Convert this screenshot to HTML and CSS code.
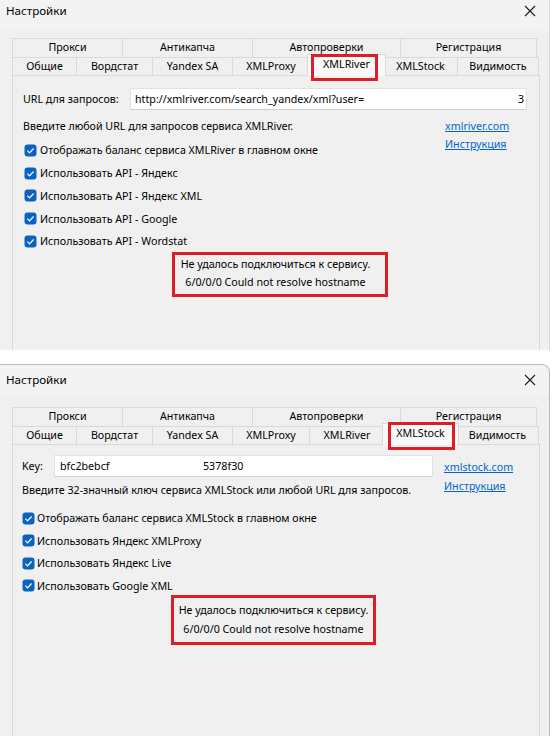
FILE: index.html
```html
<!DOCTYPE html>
<html lang="ru">
<head>
<meta charset="utf-8">
<title>Настройки</title>
<link rel="stylesheet" href="styles.css">
</head>
<body>
<div class="win win1">
  <div class="titlebar">
    <span class="title">Настройки</span>
    <svg class="close" viewBox="0 0 12 12"><path d="M1 1L11 11M11 1L1 11" stroke="#1b1b1b" stroke-width="1.1" fill="none"/></svg>
  </div>
  <div class="tabs">
    <div class="tabrow back">
      <div class="tab w-proxy">Прокси</div>
      <div class="tab w-anti">Антикапча</div>
      <div class="tab w-auto">Автопроверки</div>
      <div class="tab w-reg last">Регистрация</div>
    </div>
    <div class="tabrow front">
      <div class="tab w-gen">Общие</div>
      <div class="tab w-word">Вордстат</div>
      <div class="tab w-ysa">Yandex SA</div>
      <div class="tab w-xproxy">XMLProxy</div>
      <div class="tab w-xriver active">XMLRiver<span class="mark mark1"></span></div>
      <div class="tab w-xstock">XMLStock</div>
      <div class="tab w-vis last">Видимость</div>
    </div>
  </div>
  <div class="panel p1">
    <div class="url-row">
      <span class="lbl lbl-url">URL для запросов:</span>
      <div class="input in-url"><span>http://xmlriver.com/search_yandex/xml?user=</span><span class="tail">3</span></div>
    </div>
    <div class="cols">
      <div class="main main1">
        <div class="desc d1">Введите любой URL для запросов сервиса XMLRiver.</div>
        <div class="chk c1"><svg class="box" viewBox="0 0 13 13"><rect x="0.5" y="0.5" width="12" height="12" rx="3" fill="#0b63c1"/><path d="M3.4 6.7L5.5 8.8L9.6 4.5" stroke="#fff" stroke-width="1.2" fill="none"/></svg>Отображать баланс сервиса XMLRiver в главном окне</div>
        <div class="chk c1"><svg class="box" viewBox="0 0 13 13"><rect x="0.5" y="0.5" width="12" height="12" rx="3" fill="#0b63c1"/><path d="M3.4 6.7L5.5 8.8L9.6 4.5" stroke="#fff" stroke-width="1.2" fill="none"/></svg>Использовать API - Яндекс</div>
        <div class="chk c1"><svg class="box" viewBox="0 0 13 13"><rect x="0.5" y="0.5" width="12" height="12" rx="3" fill="#0b63c1"/><path d="M3.4 6.7L5.5 8.8L9.6 4.5" stroke="#fff" stroke-width="1.2" fill="none"/></svg>Использовать API - Яндекс XML</div>
        <div class="chk c1"><svg class="box" viewBox="0 0 13 13"><rect x="0.5" y="0.5" width="12" height="12" rx="3" fill="#0b63c1"/><path d="M3.4 6.7L5.5 8.8L9.6 4.5" stroke="#fff" stroke-width="1.2" fill="none"/></svg>Использовать API - Google</div>
        <div class="chk c1"><svg class="box" viewBox="0 0 13 13"><rect x="0.5" y="0.5" width="12" height="12" rx="3" fill="#0b63c1"/><path d="M3.4 6.7L5.5 8.8L9.6 4.5" stroke="#fff" stroke-width="1.2" fill="none"/></svg>Использовать API - Wordstat</div>
        <div class="err e1"><div>Не удалось подключиться к сервису.</div><div>6/0/0/0 Could not resolve hostname</div></div>
      </div>
      <div class="links l1"><a href="#">xmlriver.com</a><a href="#">Инструкция</a></div>
    </div>
  </div>
</div>
<div class="seam"></div>
<div class="win win2">
  <div class="titlebar">
    <span class="title">Настройки</span>
    <svg class="close" viewBox="0 0 12 12"><path d="M1 1L11 11M11 1L1 11" stroke="#1b1b1b" stroke-width="1.1" fill="none"/></svg>
  </div>
  <div class="tabs">
    <div class="tabrow back">
      <div class="tab w-proxy">Прокси</div>
      <div class="tab w-anti">Антикапча</div>
      <div class="tab w-auto">Автопроверки</div>
      <div class="tab w-reg last">Регистрация</div>
    </div>
    <div class="tabrow front">
      <div class="tab w-gen">Общие</div>
      <div class="tab w-word">Вордстат</div>
      <div class="tab w-ysa">Yandex SA</div>
      <div class="tab w-xproxy">XMLProxy</div>
      <div class="tab w-xriver">XMLRiver</div>
      <div class="tab w-xstock active">XMLStock<span class="mark mark2"></span></div>
      <div class="tab w-vis last">Видимость</div>
    </div>
  </div>
  <div class="panel p2">
    <div class="cols">
      <div class="main main2">
        <div class="key-row">
          <span class="lbl lbl-key">Key:</span>
          <div class="input in-key"><span class="key-start">bfc2bebcf</span><span>5378f30</span></div>
        </div>
        <div class="desc d2">Введите 32-значный ключ сервиса XMLStock или любой URL для запросов.</div>
        <div class="chk c2"><svg class="box" viewBox="0 0 13 13"><rect x="0.5" y="0.5" width="12" height="12" rx="3" fill="#0b63c1"/><path d="M3.4 6.7L5.5 8.8L9.6 4.5" stroke="#fff" stroke-width="1.2" fill="none"/></svg>Отображать баланс сервиса XMLStock в главном окне</div>
        <div class="chk c2"><svg class="box" viewBox="0 0 13 13"><rect x="0.5" y="0.5" width="12" height="12" rx="3" fill="#0b63c1"/><path d="M3.4 6.7L5.5 8.8L9.6 4.5" stroke="#fff" stroke-width="1.2" fill="none"/></svg>Использовать Яндекс XMLProxy</div>
        <div class="chk c2"><svg class="box" viewBox="0 0 13 13"><rect x="0.5" y="0.5" width="12" height="12" rx="3" fill="#0b63c1"/><path d="M3.4 6.7L5.5 8.8L9.6 4.5" stroke="#fff" stroke-width="1.2" fill="none"/></svg>Использовать Яндекс Live</div>
        <div class="chk c2"><svg class="box" viewBox="0 0 13 13"><rect x="0.5" y="0.5" width="12" height="12" rx="3" fill="#0b63c1"/><path d="M3.4 6.7L5.5 8.8L9.6 4.5" stroke="#fff" stroke-width="1.2" fill="none"/></svg>Использовать Google XML</div>
        <div class="err e2"><div>Не удалось подключиться к сервису.</div><div>6/0/0/0 Could not resolve hostname</div></div>
      </div>
      <div class="links l2"><a href="#">xmlstock.com</a><a href="#">Инструкция</a></div>
    </div>
  </div>
</div>
</body>
</html>
```

FILE: styles.css
```css
* { box-sizing: border-box; }
html, body { margin: 0; padding: 0; }
body {
  width: 554px;
  height: 736px;
  overflow: hidden;
  background: #ffffff;
  font-family: "Noto Sans", "Liberation Sans", Arial, sans-serif;
  font-size: 10.7px;
  color: #000;
}

.win {
  background: #f0f0f0;
  width: 550px;
  overflow: hidden;
}
.win1 {
  height: 350px;
  border-right: 1px solid #d6d6d6;
}
.seam {
  height: 14px;
  background: #ffffff;
}
.win2 {
  height: 372px;
  border-top: 1px solid #b9b9b9;
  border-right: 1px solid #b9b9b9;
  border-top-right-radius: 8px;
}

.titlebar {
  height: 30px;
  display: flex;
  justify-content: space-between;
  align-items: flex-start;
  background: #f3f3f3;
  padding: 3px 13px 0 6px;
}
.win2 .titlebar { padding-top: 7px; }
.title { line-height: 16px; font-size: 11.6px; }
.close { width: 12px; height: 12px; margin-top: 2px; }

.tabs {
  margin: 8px 0 0 12px;
  position: relative;
  z-index: 2;
}
.win2 .tabs { margin-top: 12px; }
.tabrow { display: flex; }
.tabrow.back { height: 19px; }
.tabrow.front { height: 18px; align-items: flex-end; }
.tab {
  flex: none;
  height: 100%;
  border-top: 1px solid #d9d9d9;
  border-left: 1px solid #d9d9d9;
  background: #f0f0f0;
  text-align: center;
  line-height: 17px;
  white-space: nowrap;
  position: relative;
}
.tab.last { border-right: 1px solid #d9d9d9; }
.tab.active {
  height: 22px;
  margin: 0 -2px -1px -2px;
  border-right: 1px solid #d9d9d9;
  background: #f9f9f9;
  line-height: 18px;
  z-index: 3;
}
.tab.active + .tab { border-left: none; }

.w-proxy { width: 110px; }
.w-anti { width: 130px; }
.w-auto { width: 148px; }
.w-reg { width: 137px; }
.w-gen { width: 64px; }
.w-word { width: 76px; }
.w-ysa { width: 80px; }
.w-xproxy { width: 77px; }
.w-xriver { width: 75px; }
.w-xstock { width: 73px; }
.w-vis { width: 82px; }
.tab.active.w-xriver { width: 79px; }
.tab.active.w-xstock { width: 77px; }

.mark {
  position: absolute;
  border: 3px solid #dc1f26;
  pointer-events: none;
}
.mark1 { left: 3px; top: -1px; width: 67px; height: 27px; }
.mark2 { left: 5px; top: -2px; width: 67px; height: 28px; }

.panel {
  margin-left: 12px;
  width: 528px;
  height: 400px;
  border: 1px solid #d9d9d9;
  background: #f0f0f0;
}
.p1 { padding: 12px 0 0 10px; }
.p2 { padding: 10px 0 0 9px; }

.url-row, .key-row {
  display: flex;
  align-items: center;
  height: 22px;
  white-space: nowrap;
}
.lbl { flex: none; white-space: nowrap; }
.lbl-url { width: 107px; }
.lbl-key { width: 32px; }
.input {
  height: 22px;
  background: #fff;
  border: 1px solid #e2e2e2;
  border-bottom-color: #cfcfcf;
  display: flex;
  align-items: center;
  white-space: nowrap;
  overflow: hidden;
}
.in-url { width: 397px; padding-left: 4px; padding-right: 2px; }
.in-url .tail { margin-left: auto; }
.in-key { width: 379px; padding-left: 5px; }
.key-start { width: 143px; flex: none; }

.cols { display: flex; }
.main { flex: none; }
.main1 { width: 422px; }
.main2 { width: 422px; }

.desc { white-space: nowrap; }
.d1 { height: 22px; line-height: 22px; margin-top: 5px; }
.d2 { height: 23px; line-height: 23px; margin-top: 2px; }

.chk {
  display: flex;
  align-items: center;
  white-space: nowrap;
}
.box { width: 13px; height: 13px; flex: none; }
.c1 { height: 22.75px; padding-left: 1px; }
.c1 .box { margin-right: 3px; }
.c2 { height: 22.5px; }
.c2 .box { margin-right: 2px; }
.d2 + .c2 { margin-top: 5px; }
.d1 + .c1 { margin-top: 2px; }

.err {
  border: 3px solid #dc1f26;
  text-align: center;
  white-space: nowrap;
}
.e1 { margin-left: 149px; width: 216px; line-height: 18.5px; padding: 0 9px 2px 0; margin-top: -1px; }
.e2 { margin-left: 149px; width: 205px; line-height: 19px; padding: 3px 0 3px; margin-top: -2px; }

.links {
  display: flex;
  flex-direction: column;
  align-items: flex-start;
}
.links a { color: #0066cc; text-decoration: underline; line-height: 18px; }
.l1 { padding-top: 7px; }
.l2 { padding-top: 3px; }
.l2 a { line-height: 19px; }
```
